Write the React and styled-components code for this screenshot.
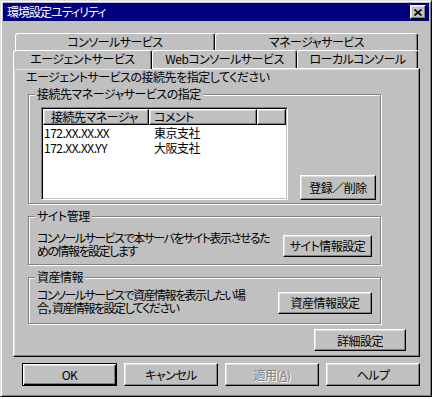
import React from "react";
import styled, { createGlobalStyle, css } from "styled-components";

const GlobalStyle = createGlobalStyle`
  html, body {
    margin: 0;
    padding: 0;
    background: #fff;
  }
`;

const raised = css`
  border: 1px solid;
  border-color: #fff #000 #000 #fff;
  box-shadow: inset -1px -1px 0 #808080, inset 1px 1px 0 #dfdfdf;
`;

const Window = styled.div`
  box-sizing: border-box;
  width: 432px;
  height: 397px;
  padding: 2px;
  background: #c0c0c0;
  border: 1px solid;
  border-color: #dfdfdf #000 #000 #dfdfdf;
  box-shadow: inset 1px 1px 0 #fff, inset -1px -1px 0 #808080;
  display: flex;
  flex-direction: column;
  font-family: "Noto Sans CJK JP", "Liberation Sans", sans-serif;
  font-feature-settings: "palt";
  font-size: 12px;
  letter-spacing: -0.5px;
  color: #000;
`;

const TitleBar = styled.div`
  height: 18px;
  background: #000080;
  display: flex;
  align-items: center;
  justify-content: space-between;
  padding-left: 4px;
`;

const Title = styled.span`
  color: #fff;
  line-height: 18px;
  letter-spacing: -1px;
`;

const CloseBox = styled.div`
  ${raised};
  box-sizing: border-box;
  width: 16px;
  height: 14px;
  margin-right: 3px;
  background: #c0c0c0;
  display: flex;
  align-items: center;
  justify-content: center;
`;

const Body = styled.div`
  flex: 1;
  display: flex;
  flex-direction: column;
  padding: 12px 9px 0 10px;
`;

const TabStrip = styled.div`
  display: flex;
  flex-direction: column;
  margin-right: 2px;
`;

const TabRow = styled.div`
  display: flex;
  margin-left: ${(p) => p.$indent || 0}px;
  height: ${(p) => p.$h}px;
`;

const Tab = styled.div`
  flex: ${(p) => (p.$w ? `0 0 ${p.$w}px` : 1)};
  box-sizing: border-box;
  background: #c0c0c0;
  border-top: 1px solid #fff;
  border-left: 1px solid #fff;
  border-right: 1px solid #000;
  border-radius: 3px 3px 0 0;
  box-shadow: inset -1px 0 0 #808080;
  text-align: center;
  line-height: 16px;
  white-space: nowrap;
  position: relative;
  ${(p) =>
    p.$active &&
    css`
      z-index: 1;
      margin-bottom: -1px;
    `}
`;

const Panel = styled.div`
  box-sizing: border-box;
  height: 289px;
  ${raised};
  padding: 1px 13px 0 12px;
  display: flex;
  flex-direction: column;
`;

const Lead = styled.div`
  line-height: 14px;
  white-space: nowrap;
`;

const Group = styled.fieldset`
  width: 353px;
  box-sizing: border-box;
  margin: ${(p) => p.$mt}px 0 0 2px;
  padding: 0;
  min-width: 0;
  border: 1px solid #808080;
  box-shadow: 1px 1px 0 #fff, inset 1px 1px 0 #fff;
`;

const Legend = styled.legend`
  margin-left: 6px;
  padding: 0 2px;
  line-height: 14px;
  background: #c0c0c0;
`;

const GroupBody = styled.div`
  display: flex;
  align-items: ${(p) => p.$align || "center"};
  padding: ${(p) => p.$pt}px 8px ${(p) => p.$pb}px ${(p) => p.$pl || 8}px;
  gap: 12px;
`;

const Note = styled.div`
  line-height: 13px;
  margin-bottom: 3px;
  white-space: nowrap;
  letter-spacing: -1.5px;
`;

const ListView = styled.div`
  box-sizing: border-box;
  width: 247px;
  height: 93px;
  padding: 1px;
  background: #fff;
  border: 1px solid;
  border-color: #808080 #fff #fff #808080;
  box-shadow: inset 1px 1px 0 #000, inset -1px -1px 0 #c0c0c0;
  flex: none;
`;

const Columns = styled.div`
  display: grid;
  grid-template-columns: 106px 108px 1fr;
`;

const HeadCell = styled.div`
  ${raised};
  box-sizing: border-box;
  height: 16px;
  line-height: 14px;
  padding-left: ${(p) => p.$pad}px;
  background: #c0c0c0;
  white-space: nowrap;
`;

const Cell = styled.div`
  line-height: 15px;
  padding-left: ${(p) => p.$pad}px;
  white-space: nowrap;
`;

const Button = styled.button`
  ${raised};
  box-sizing: border-box;
  width: ${(p) => p.$w}px;
  height: ${(p) => p.$h || 22}px;
  padding: 0;
  background: #c0c0c0;
  font: inherit;
  letter-spacing: inherit;
  color: #000;
  flex: none;
  white-space: nowrap;
  margin-left: ${(p) => (p.$push ? "auto" : "0")};
  ${(p) =>
    p.$default &&
    css`
      border: 1px solid #000;
      box-shadow: inset 1px 1px 0 #fff, inset -1px -1px 0 #000,
        inset -2px -2px 0 #808080, inset 2px 2px 0 #dfdfdf;
    `}
  ${(p) =>
    p.disabled &&
    css`
      color: #808080;
      text-shadow: 1px 1px 0 #fff;
    `}
`;

const DetailRow = styled.div`
  display: flex;
  justify-content: flex-end;
  margin-top: 5px;
`;

const ButtonBar = styled.div`
  display: flex;
  gap: 7px;
  margin-top: 6px;
  padding-left: 9px;
`;

const rows = [
  ["172.XX.XX.XX", "東京支社"],
  ["172.XX.XX.YY", "大阪支社"],
];

export default function App() {
  return (
    <>
      <GlobalStyle />
      <Window>
        <TitleBar>
          <Title>環境設定ユティリティ</Title>
          <CloseBox>
            <svg width="8" height="7" viewBox="0 0 8 7">
              <path d="M0.5 0.5 L7.5 6.5 M7.5 0.5 L0.5 6.5" stroke="#000" strokeWidth="1.6" />
            </svg>
          </CloseBox>
        </TitleBar>
        <Body>
          <TabStrip>
            <TabRow $indent={2} $h={17}>
              <Tab $w={200}>コンソールサービス</Tab>
              <Tab>マネージャサービス</Tab>
            </TabRow>
            <TabRow $h={18}>
              <Tab $w={139} $active>
                エージェントサービス
              </Tab>
              <Tab $w={145}>Webコンソールサービス</Tab>
              <Tab>ローカルコンソール</Tab>
            </TabRow>
          </TabStrip>
          <Panel>
            <Lead>エージェントサービスの接続先を指定してください</Lead>
            <Group $mt={3}>
              <Legend>接続先マネージャサービスの指定</Legend>
              <GroupBody $align="flex-end" $pt={6} $pb={3} $pl={12}>
                <ListView>
                  <Columns>
                    <HeadCell $pad={7}>接続先マネージャ</HeadCell>
                    <HeadCell $pad={4}>コメント</HeadCell>
                    <HeadCell />
                  </Columns>
                  {rows.map(([ip, name]) => (
                    <Columns key={ip}>
                      <Cell $pad={1}>{ip}</Cell>
                      <Cell $pad={5}>{name}</Cell>
                    </Columns>
                  ))}
                </ListView>
                <Button $w={76} $h={25}>
                  登録／削除
                </Button>
              </GroupBody>
            </Group>
            <Group $mt={5}>
              <Legend>サイト管理</Legend>
              <GroupBody $pt={8} $pb={4}>
                <Note>
                  コンソールサービスで本サーバをサイト表示させるた
                  <br />
                  めの情報を設定します
                </Note>
                <Button $w={89} $push>
                  サイト情報設定
                </Button>
              </GroupBody>
            </Group>
            <Group $mt={5}>
              <Legend>資産情報</Legend>
              <GroupBody $pt={4} $pb={6}>
                <Note>
                  コンソールサービスで資産情報を表示したい場
                  <br />
                  合，資産情報を設定してください
                </Note>
                <Button $w={94} $push>
                  資産情報設定
                </Button>
              </GroupBody>
            </Group>
            <DetailRow>
              <Button $w={92}>詳細設定</Button>
            </DetailRow>
          </Panel>
          <ButtonBar>
            <Button $w={95} $h={23} $default>
              OK
            </Button>
            <Button $w={94} $h={23}>
              キャンセル
            </Button>
            <Button $w={94} $h={23} disabled>
              適用(<u>A</u>)
            </Button>
            <Button $w={94} $h={23}>
              ヘルプ
            </Button>
          </ButtonBar>
        </Body>
      </Window>
    </>
  );
}
